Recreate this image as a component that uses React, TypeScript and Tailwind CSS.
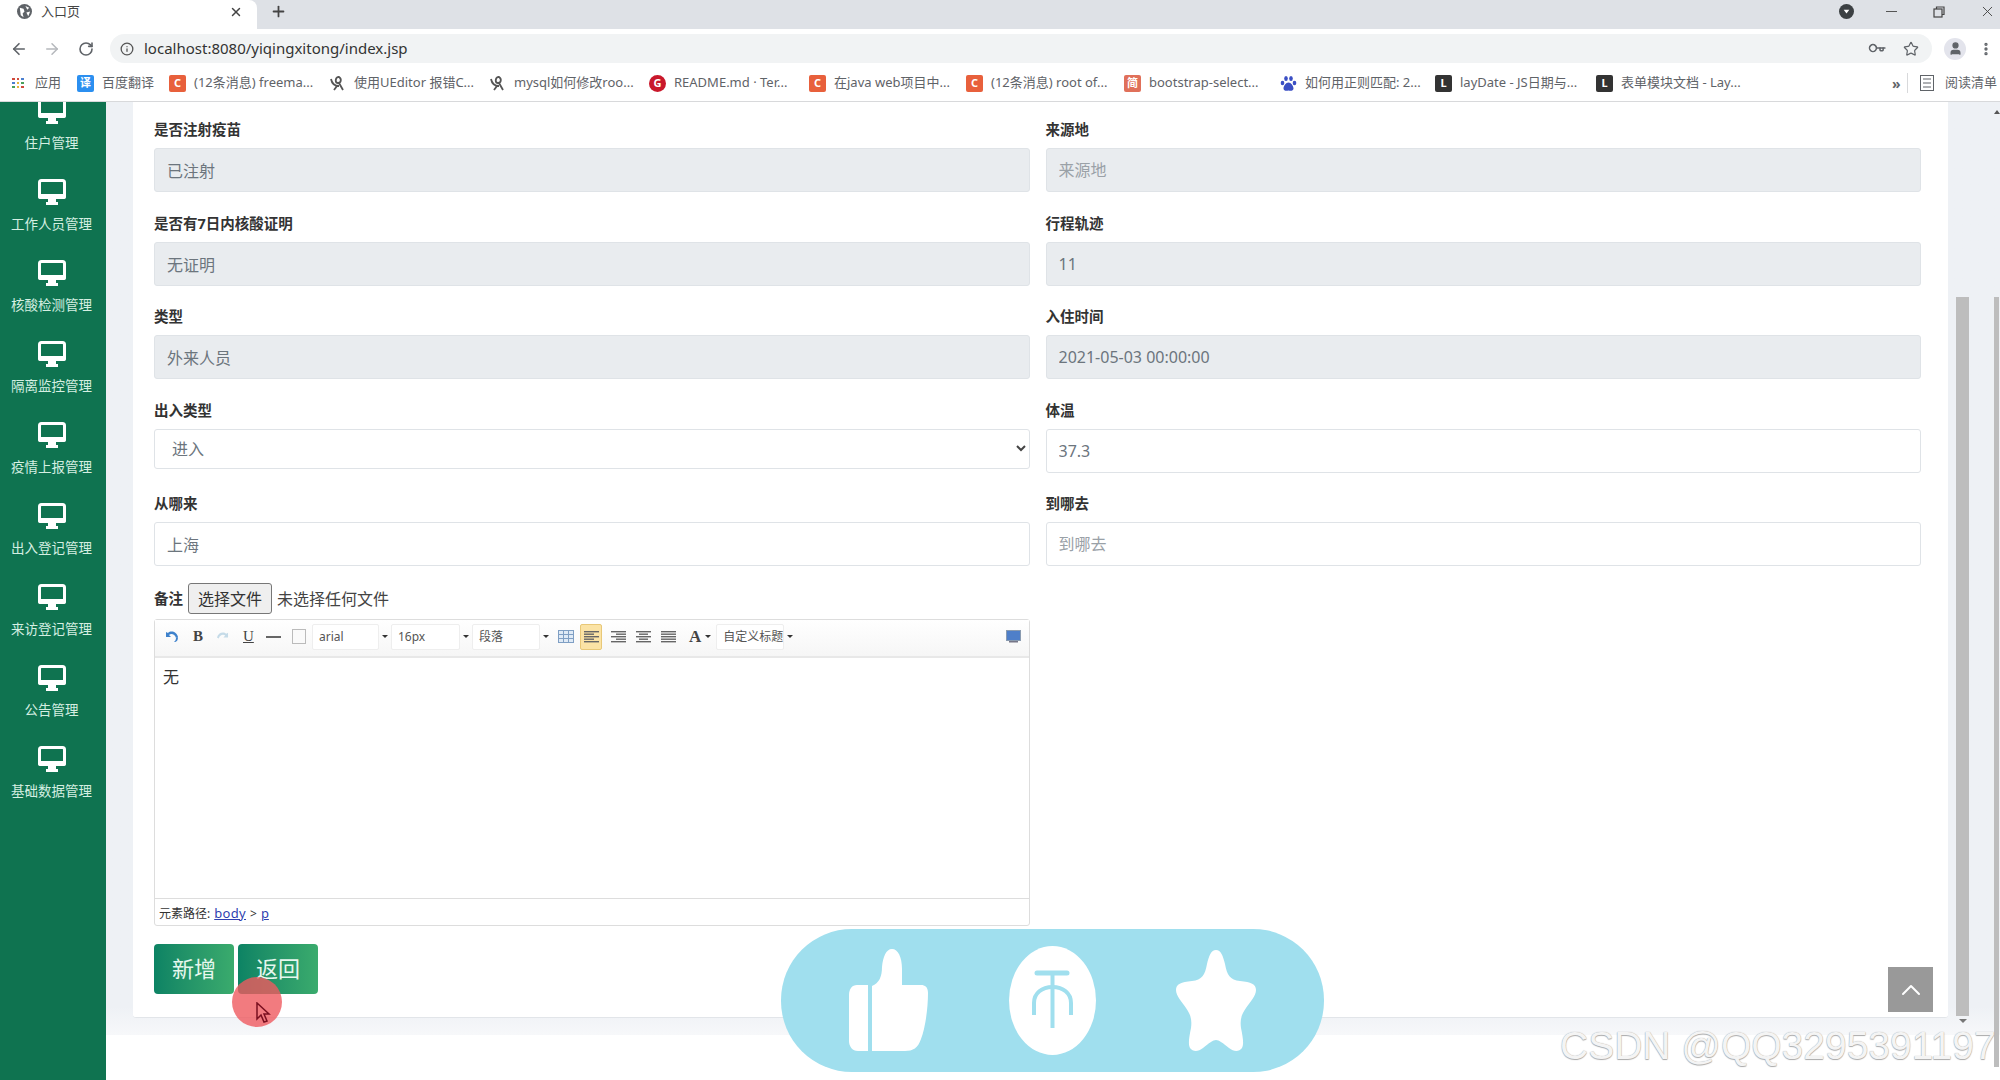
import { ArrowLeft, ArrowRight, ChevronUp, Info, Key, MoreVertical, Plus, RotateCw, Star, User, X } from "lucide-react";
import type { ReactNode } from "react";

function Monitor() {
  return (
    <svg width="28" height="26" viewBox="0 0 28 26" className="shrink-0">
      <rect x="1.5" y="1.5" width="25" height="17" rx="2" fill="none" stroke="#fff" strokeWidth="3" />
      <rect x="0" y="15" width="28" height="5" rx="2" fill="#fff" />
      <rect x="10" y="20" width="8" height="3" fill="#fff" />
      <rect x="8" y="23" width="12" height="3" fill="#fff" />
    </svg>
  );
}

const menu = ["住户管理", "工作人员管理", "核酸检测管理", "隔离监控管理", "疫情上报管理", "出入登记管理", "来访登记管理", "公告管理", "基础数据管理"];

function Mark({ className, children }: { className: string; children?: ReactNode }) {
  return (
    <span className={`flex h-[17px] w-[17px] shrink-0 items-center justify-center rounded-[2px] text-[11px] font-bold text-white ${className}`}>
      {children}
    </span>
  );
}

function Bird() {
  return (
    <svg width="17" height="17" viewBox="0 0 17 17" className="shrink-0" fill="none" stroke="#555" strokeWidth="1.8">
      <path d="M2 4c1 5 4 7 8 7M9 2c-3 1-3 6 0 6s4-4 1-6zM10 8l4 7M8 11l-3 4" />
    </svg>
  );
}

function Paw() {
  return (
    <svg width="17" height="17" viewBox="0 0 17 17" className="shrink-0" fill="#3b4fc4">
      <ellipse cx="6" cy="3.5" rx="1.8" ry="2.5" />
      <ellipse cx="11" cy="3.5" rx="1.8" ry="2.5" />
      <ellipse cx="2.5" cy="8" rx="1.8" ry="2.3" />
      <ellipse cx="14.5" cy="8" rx="1.8" ry="2.3" />
      <path d="M8.5 7.5c-2.5 0-5 3.5-5 6 0 2.5 3 2.5 5 2 2 .5 5 .5 5-2 0-2.5-2.5-6-5-6z" />
    </svg>
  );
}

function Bookmark({ w, icon, text }: { w: string; icon: ReactNode; text: string }) {
  return (
    <div className={`flex shrink-0 items-center gap-2 ${w}`}>
      {icon}
      <span className="whitespace-nowrap text-[13px] text-[#5f6368]">{text}</span>
    </div>
  );
}

function Field({ label, value, placeholder, plain }: { label: string; value?: string; placeholder?: string; plain?: boolean }) {
  return (
    <div>
      <div className="mb-[9px] text-[14.5px] font-bold leading-5 text-[#333]">{label}</div>
      <input
        readOnly
        value={value ?? ""}
        placeholder={placeholder}
        className={`h-11 w-full rounded-[3px] border border-[#dfe3e7] px-3 text-[16px] text-[#6c757d] outline-none placeholder:text-[#9aa1a7] ${plain ? "bg-white" : "bg-[#e9ecef]"}`}
      />
    </div>
  );
}

function Combo({ w, text }: { w: string; text: string }) {
  return (
    <div className={`flex h-[26px] shrink-0 items-center ${w}`}>
      <div className="flex h-full flex-1 items-center rounded-[2px] border border-[#eee] bg-white pl-1.5 text-[12px] text-[#555]">{text}</div>
      <span className="ml-[3px] mr-[3px] h-0 w-0 border-x-[3px] border-t-[3px] border-x-transparent border-t-[#333]" />
    </div>
  );
}

function Lines({ kind }: { kind: "left" | "right" | "center" | "full" }) {
  const rows = [0, 1, 2, 3, 4];
  const x = (i: number) => {
    const short = i % 2 === 1;
    if (kind === "full" || !short) return { x: 0, w: 15 };
    if (kind === "left") return { x: 0, w: 10 };
    if (kind === "right") return { x: 5, w: 10 };
    return { x: 3, w: 9 };
  };
  return (
    <svg width="15" height="12" viewBox="0 0 15 12" className="shrink-0">
      {rows.map((i) => (
        <rect key={i} x={x(i).x} y={i * 2.5} width={x(i).w} height="1.4" fill="#666" />
      ))}
    </svg>
  );
}

function EditorToolbar() {
  return (
    <div className="flex h-[38px] items-center border-b-2 border-[#e8e8e8] bg-gradient-to-b from-white to-[#f6f6f6] pb-[3px] pl-[9px] pr-2">
      <svg width="14" height="13" viewBox="0 0 14 13" className="shrink-0 ml-px">
        <path d="M1 2v5h5L4 5c2-2 6-1 7 3l2-1C12 2 6 0 3 3z" fill="#3f82cc" />
        <path d="M11 8c0 2-1 3-2 4 3 0 4-2 4-5z" fill="#3f82cc" />
      </svg>
      <span className="ml-[14px] w-[11px] font-['Liberation_Serif',serif] text-[15px] font-bold text-[#444]">B</span>
      <svg width="13" height="12" viewBox="0 0 14 13" className="ml-[12px] shrink-0">
        <path d="M13 2v5H8l2-2C8 3 4 4 3 8L1 7c1-5 7-7 10-4z" fill="#c5dbe8" />
      </svg>
      <span className="ml-[14px] w-[11px] font-['Liberation_Serif',serif] text-[15px] text-[#444] underline">U</span>
      <span className="ml-[12px] h-0.5 w-[15px] shrink-0 bg-[#666]" />
      <span className="ml-[11px] h-[15px] w-[14px] shrink-0 border border-[#bbb] bg-[#fafafa]" />
      <div className="ml-[6px] flex">
        <Combo w="w-[79px]" text="arial" />
        <Combo w="w-[81px]" text="16px" />
        <Combo w="w-[80px]" text="段落" />
      </div>
      <svg width="16" height="13" viewBox="0 0 16 13" className="ml-[6px] shrink-0">
        <rect x="0.5" y="0.5" width="15" height="12" fill="#dfeaf6" stroke="#7f9fc4" />
        <path d="M0 4.5h16M0 8.5h16M5.5 0v13M10.5 0v13" stroke="#7f9fc4" />
      </svg>
      <span className="ml-[6px] flex h-[26px] w-[22px] shrink-0 items-center justify-center rounded-[2px] border border-[#e8c878] bg-[#fbe3a5]">
        <Lines kind="left" />
      </span>
      <span className="ml-[9px] shrink-0"><Lines kind="right" /></span>
      <span className="ml-[10px] shrink-0"><Lines kind="center" /></span>
      <span className="ml-[10px] shrink-0"><Lines kind="full" /></span>
      <span className="ml-[13px] font-['Liberation_Serif',serif] text-[17px] font-bold leading-none text-[#444]">A</span>
      <span className="ml-[4px] h-0 w-0 shrink-0 border-x-[3px] border-t-[3px] border-x-transparent border-t-[#333]" />
      <div className="ml-[5px]">
        <Combo w="w-[80px]" text="自定义标题" />
      </div>
      <svg width="15" height="14" viewBox="0 0 15 14" className="ml-auto shrink-0">
        <rect x="0.5" y="0.5" width="14" height="10" fill="#4f7fc9" stroke="#8a9bb0" />
        <rect x="3" y="11" width="9" height="1.5" fill="#778" />
      </svg>
    </div>
  );
}

function ThumbIcon() {
  return (
    <svg width="79" height="103" viewBox="0 0 79 103" fill="#fff">
      <path d="M19 36V102H9C3 102 0 97 0 92V46C0 40 3 36 8 36Z" />
      <path d="M23 102V37C30 34 33 28 33 18C34 8 37 0 43 0C49 0 53 8 53 20V36H72C76 36 79 38 79 44C79 60 76 80 72 90C69 99 64 102 56 102Z" />
    </svg>
  );
}

function CoinIcon() {
  return (
    <svg width="87" height="109" viewBox="0 0 87 109">
      <ellipse cx="43.5" cy="54.5" rx="43.5" ry="54.5" fill="#fff" />
      <g stroke="#a0dfee" fill="none" strokeWidth="4">
        <path d="M28 27H58" strokeLinecap="round" strokeWidth="5" />
        <path d="M43.5 27V82" />
        <path d="M25 69V57C25 47 33 41 43.5 41C54 41 62 47 62 57V69" />
      </g>
    </svg>
  );
}

function StarIcon() {
  return (
    <svg width="80" height="102" viewBox="0 0 80 102" fill="#fff">
      <path d="M40 0C45 0 47 6 49 14C51 25 54 30 64 31C75 32 80 34 80 40C80 46 74 52 70 58C65 65 64 70 65 78C67 88 68 94 66 98C63 102 58 102 53 98C47 93 43 90 40 90C37 90 33 93 27 98C22 102 17 102 14 98C12 94 13 88 15 78C16 70 15 65 10 58C6 52 0 46 0 40C0 34 5 32 16 31C26 30 29 25 31 14C33 6 35 0 40 0Z" />
    </svg>
  );
}

export default function App() {
  return (
    <div className="relative flex h-[1080px] w-[2000px] flex-col overflow-hidden bg-white font-['Noto_Sans','Noto_Sans_CJK_SC',sans-serif]">
      {/* tab strip */}
      <div className="flex h-[29px] shrink-0 items-center bg-[#dee1e6]">
        <div className="flex h-full w-[257px] items-center rounded-tr-lg bg-white pb-[6px] pl-[17px] pr-[14px]">
          <svg width="15" height="15" viewBox="0 0 16 16" className="shrink-0">
            <circle cx="8" cy="8" r="8" fill="#5f6368" />
            <path d="M3 4l4 1 1 3-2 2 1 4-3-2zM9 2l4 2-2 2zM10 9l4-1-2 5z" fill="#fff" />
          </svg>
          <span className="ml-[9px] text-[13px] text-[#444]">入口页</span>
          <X size={14} strokeWidth={2.5} className="ml-auto text-[#444]" />
        </div>
        <div className="flex h-full flex-1 items-center pb-[6px]">
          <Plus size={17} strokeWidth={2.5} className="ml-[13px] text-[#444]" />
          <svg width="15" height="15" viewBox="0 0 16 16" className="ml-auto shrink-0">
            <circle cx="8" cy="8" r="8" fill="#3c4043" />
            <path d="M5 6h6l-3 4z" fill="#fff" />
          </svg>
          <span className="ml-[32px] h-[1.5px] w-[11px] bg-[#555]" />
          <svg width="12" height="12" viewBox="0 0 12 12" fill="none" stroke="#444" strokeWidth="1.2" className="ml-[36px]">
            <rect x="1" y="3" width="8" height="8" />
            <path d="M3.5 3V1H11V8.5H9" />
          </svg>
          <X size={17} strokeWidth={1.3} className="ml-[34px] mr-[4px] text-[#444]" />
        </div>
      </div>
      {/* address bar */}
      <div className="flex h-[34px] shrink-0 items-center bg-white pl-[10px] pt-[5px]">
        <ArrowLeft size={18} strokeWidth={2.2} className="text-[#5f6368]" />
        <ArrowRight size={18} strokeWidth={2} className="ml-[15px] text-[#b5b8bc]" />
        <RotateCw size={16} strokeWidth={2.4} className="ml-[17px] text-[#5f6368]" />
        <div className="ml-[16px] flex h-[29px] w-[1822px] items-center rounded-full bg-[#f1f3f4] pl-[10px] pr-[13px]">
          <Info size={14} strokeWidth={2.2} className="text-[#555]" />
          <span className="ml-[10px] text-[15px] text-[#333]">localhost:8080/yiqingxitong/index.jsp</span>
          <Key size={15} strokeWidth={2.5} className="ml-auto rotate-45 text-[#5f6368]" />
          <Star size={16} strokeWidth={1.8} className="ml-[19px] text-[#5f6368]" />
        </div>
        <span className="ml-[12px] flex h-[22px] w-[22px] shrink-0 items-center justify-center rounded-full bg-[#e3e4ec]">
          <User size={15} fill="#5f6368" strokeWidth={2} className="text-[#5f6368]" />
        </span>
        <MoreVertical size={16} strokeWidth={3} className="ml-[12px] text-[#5f6368]" />
      </div>
      {/* bookmarks */}
      <div className="flex h-[39px] shrink-0 items-center border-b border-[#d8d9db] bg-white pl-[12px] pt-[2px]">
        <div className="grid w-[12px] shrink-0 grid-cols-3 gap-[1.5px]">
          {["bg-[#d04a3b]", "bg-[#d04a3b]", "bg-[#4a7fd0]", "bg-[#4a7fd0]", "bg-[#e5b53a]", "bg-[#4aa05a]", "bg-[#4aa05a]", "bg-[#e5b53a]", "bg-[#d04a3b]"].map((c, i) => (
            <span key={i} className={`h-[2.5px] w-[2.5px] ${c}`} />
          ))}
        </div>
        <span className="ml-[11px] w-[42px] shrink-0 text-[13px] text-[#5f6368]">应用</span>
        <Bookmark w="w-[92px]" icon={<Mark className="bg-[#2b8ff0]">译</Mark>} text="百度翻译" />
        <Bookmark w="w-[160px]" icon={<Mark className="bg-[#e8603c]">C</Mark>} text="(12条消息) freema..." />
        <Bookmark w="w-[160px]" icon={<Bird />} text="使用UEditor 报错C..." />
        <Bookmark w="w-[160px]" icon={<Bird />} text="mysql如何修改roo..." />
        <Bookmark w="w-[160px]" icon={<Mark className="rounded-full bg-[#c9182b]">G</Mark>} text="README.md · Ter..." />
        <Bookmark w="w-[157px]" icon={<Mark className="bg-[#e8603c]">C</Mark>} text="在java web项目中..." />
        <Bookmark w="w-[158px]" icon={<Mark className="bg-[#e8603c]">C</Mark>} text="(12条消息) root of..." />
        <Bookmark w="w-[156px]" icon={<Mark className="bg-[#e0705a]">简</Mark>} text="bootstrap-select..." />
        <Bookmark w="w-[155px]" icon={<Paw />} text="如何用正则匹配: 2..." />
        <Bookmark w="w-[161px]" icon={<Mark className="bg-[#333]">L</Mark>} text="layDate - JS日期与..." />
        <Bookmark w="w-[296px]" icon={<Mark className="bg-[#333]">L</Mark>} text="表单模块文档 - Lay..." />
        <span className="w-[15px] shrink-0 text-[14px] font-bold text-[#5f6368]">»</span>
        <span className="h-[20px] w-px shrink-0 bg-[#d8d9db]" />
        <svg width="14" height="16" viewBox="0 0 14 16" fill="none" stroke="#5f6368" className="ml-[12px] shrink-0">
          <rect x="0.5" y="0.5" width="13" height="15" />
          <path d="M3 4h8M3 8h8M3 12h8" />
        </svg>
        <span className="ml-[11px] whitespace-nowrap text-[13px] text-[#5f6368]">阅读清单</span>
      </div>

      {/* page */}
      <div className="flex min-h-0 flex-1">
        <aside className="flex w-[106px] shrink-0 flex-col items-center overflow-hidden bg-[#0f7350] pr-[3px]">
          <div className="-mt-[4px] flex flex-col items-center">
            {menu.map((m) => (
              <div key={m} className="flex h-[81px] flex-col items-center">
                <Monitor />
                <span className="mt-[9px] whitespace-nowrap text-[13.5px] leading-5 text-[#d5efe2]">{m}</span>
              </div>
            ))}
          </div>
        </aside>
        <main className="flex min-w-0 flex-1 flex-col">
          <div className="flex h-[933px] bg-gradient-to-b from-[#eef1f5] from-[97%] to-[#f7f8fa]">
            <section className="ml-[27px] h-[916px] w-[1815px] rounded-b-[3px] border-b border-[#e2e5e9] bg-white pl-[21px] pr-[27px] pt-[17px]">
              <div className="grid grid-cols-2 gap-x-4 gap-y-[20.5px]">
                <Field label="是否注射疫苗" value="已注射" />
                <Field label="来源地" placeholder="来源地" />
                <Field label="是否有7日内核酸证明" value="无证明" />
                <Field label="行程轨迹" value="11" />
                <Field label="类型" value="外来人员" />
                <Field label="入住时间" value="2021-05-03 00:00:00" />
                <div>
                  <div className="mb-[9px] text-[14.5px] font-bold leading-5 text-[#333]">出入类型</div>
                  <div className="flex h-10 w-full items-center justify-between rounded-[3px] border border-[#dfe3e7] bg-white pl-[17px] pr-[3px] text-[16px] text-[#6c757d]">
                    <span>进入</span>
                    <svg width="10" height="7" viewBox="0 0 10 7" fill="none" stroke="#444" strokeWidth="2">
                      <path d="M1 1l4 4 4-4" />
                    </svg>
                  </div>
                </div>
                <Field label="体温" value="37.3" plain />
                <Field label="从哪来" value="上海" plain />
                <Field label="到哪去" placeholder="到哪去" plain />
              </div>
              <div className="mt-[17px] flex h-[31px] items-center">
                <span className="text-[14.5px] font-bold text-[#333]">备注</span>
                <button className="ml-[5px] h-[31px] w-[84px] rounded-[3px] border border-[#777] bg-[#efefef] text-[16px] text-[#333]">选择文件</button>
                <span className="ml-[5px] text-[16px] text-[#444]">未选择任何文件</span>
              </div>
              <div className="mt-[5px] w-[876px] rounded-[3px] border border-[#ddd]">
                <EditorToolbar />
                <div className="h-[241px] border-b border-[#ddd] px-2 pt-[7px] text-[16px] text-[#333]">无</div>
                <div className="flex h-[26px] items-center pl-1 pt-[3px] text-[12px] text-[#333]">
                  元素路径:
                  <a className="ml-1 text-[13px] tracking-wide text-[#2f3fb0] underline">body</a>
                  <span className="mx-1">&gt;</span>
                  <a className="text-[13px] text-[#2f3fb0] underline">p</a>
                </div>
              </div>
              <div className="mt-[18px] flex gap-1">
                <button className="h-[50px] w-20 rounded-[4px] bg-gradient-to-r from-[#0c8364] to-[#3aab6d] pb-px text-[22px] text-[#e6f7ee]">新增</button>
                <button className="h-[50px] w-20 rounded-[4px] bg-gradient-to-r from-[#0c8364] to-[#3aab6d] pb-px text-[22px] text-[#e6f7ee]">返回</button>
              </div>
            </section>
            <div className="ml-[8px] h-full w-[13px] pt-[195px]">
              <div className="h-[719px] bg-[#bdbdbd]" />
              <div className="mx-auto mt-[3px] h-0 w-0 border-x-[4px] border-t-[4px] border-x-transparent border-t-[#777]" />
            </div>
            <div className="ml-[25px] w-[5px] pt-[8px]">
              <div className="mx-auto h-0 w-0 border-x-[3px] border-b-[4px] border-x-transparent border-b-[#555]" />
              <div className="mt-[183px] h-[770px] bg-[#bdbdbd]" />
            </div>
          </div>
        </main>
      </div>

      {/* overlays from the recording */}
      <div className="absolute left-[781px] top-[929px] flex h-[143px] w-[543px] items-center rounded-[71px] bg-[#a0dfee] pl-[68px]">
        <ThumbIcon />
        <span className="ml-[81px]"><CoinIcon /></span>
        <span className="ml-[80px]"><StarIcon /></span>
      </div>
      <div className="absolute left-[1888px] top-[967px] flex h-[45px] w-[45px] items-center justify-center bg-[#999]">
        <ChevronUp size={32} strokeWidth={1.5} className="text-white" />
      </div>
      <div className="absolute left-[232px] top-[977px] h-[50px] w-[50px] rounded-full bg-[#ef5a5f]/80" />
      <svg width="16" height="22" viewBox="0 0 16 22" className="absolute left-[256px] top-[1002px]">
        <path d="M1 1V17L5 13L8 20L11 19L8 12H13Z" fill="none" stroke="#7a1020" strokeWidth="1.5" />
      </svg>
      <div className="absolute left-[1560px] top-[1021px] whitespace-nowrap font-['Liberation_Sans',sans-serif] text-[39px] leading-[50px] text-[#f4f4f4] [text-shadow:0_1px_1px_#aaa,0_0_1px_#999]">
        CSDN @QQ3295391197
      </div>
    </div>
  );
}
